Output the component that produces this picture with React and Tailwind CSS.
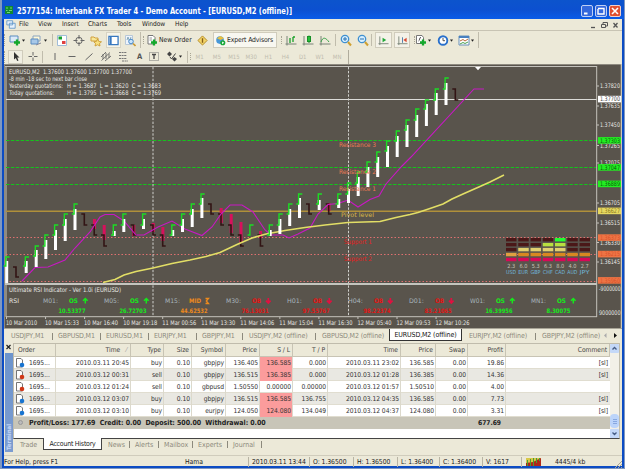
const FONT = "font-['DejaVu_Sans_Condensed','Noto_Sans',sans-serif]";

// [x, high, left tick, body top, body bottom]
const bulls = [
  [6.5, 257, 266, 261, 283],
  [26, 257, 266, 261, 273],
  [36, 246, 256, 250, 267],
  [45.6, 235, 246, 240, 259],
  [55.3, 225, 235, 230, 250],
  [65, 214, 225, 219, 241],
  [74.8, 204, 214, 209, 230],
  [114, 225, 235, 231, 236],
  [123.6, 214, 225, 219, 232],
  [143.3, 214, 225, 219, 229],
  [172.5, 225, 235, 230, 236],
  [182.3, 214, 225, 219, 232],
  [192, 204, 214, 209, 227],
  [201.7, 194, 204, 198, 218],
  [250.6, 225, 235, 235, 235],
  [270, 225, 235, 230, 236],
  [279.7, 214, 225, 219, 234],
  [289.5, 204, 214, 209, 226],
  [299.3, 194, 204, 198, 218],
  [319, 194, 204, 200, 210],
  [338.5, 194, 204, 199, 208],
  [348.3, 183, 194, 189, 203],
  [358, 172, 183, 177, 196],
  [367.7, 162, 172, 167, 187],
  [377.5, 152, 162, 157, 177],
  [387.3, 141, 151, 146, 167],
  [397, 131, 141, 136, 157],
  [406.8, 120, 130, 125, 147],
  [416.5, 109, 120, 115, 137],
  [426.2, 100, 109, 104, 126],
  [436, 89, 100, 93, 115],
  [445.8, 78, 89, 83, 105],
];

// [x, left tick, low, body top, body bottom]
const bears = [
  [16, 267, 277, 0, 0],
  [84.3, 214, 225, 0, 0],
  [94.2, 225, 235, 219, 229],
  [104, 235, 246, 225, 240],
  [133.6, 225, 235, 225, 236],
  [153, 225, 235, 223, 232],
  [162.7, 235, 246, 227, 241],
  [211, 204, 214, 0, 0],
  [221, 214, 225, 208, 223],
  [231, 225, 235, 214, 233],
  [240.8, 235, 246, 222, 243],
  [260.4, 235, 246, 231, 238],
  [309, 204, 214, 0, 0],
  [328.7, 204, 214, 203, 211],
  [455.3, 89, 100, 0, 0],
];

const scale = [
  [86, "1.37820"],
  [106, "1.37635"],
  [125, "1.37450"],
  [145.5, "1.37265"],
  [163, "1.37075"],
  [203, "1.36705"],
  [223, "1.36515"],
  [242.5, "1.36330"],
  [262, "1.36145"],
];

const priceTags = [
  [99, "1.37700", "#ffffff", "#444"],
  [140.3, "1.37303", "#22ee22", "#0a5a0a"],
  [167.3, "1.37047", "#22ee22", "#0a5a0a"],
  [183.8, "1.36889", "#22ee22", "#0a5a0a"],
  [210.8, "1.36627", "#e6d860", "#8a7a20"],
  [237.5, "1.36373", "#ee7444", "#d8522c"],
  [254, "1.36215", "#ee7444", "#d8522c"],
  [280.3, "1.35960", "#ee7444", "#d8522c"],
];

const times = [
  "10 Mar 2010", "10 Mar 15:33", "10 Mar 16:40", "10 Mar 19:18", "11 Mar 00:56", "11 Mar 13:30",
  "11 Mar 14:06", "11 Mar 15:04", "11 Mar 16:30", "12 Mar 05:40", "12 Mar 09:53", "12 Mar 10:26",
];

const rsi = [
  ["M01:", "OS", "10.53377"],
  ["M05:", "OS", "26.72703"],
  ["M15:", "MID", "44.62532"],
  ["M30:", "OB", "76.13031"],
  ["H01:", "OB", "97.55767"],
  ["H04:", "OB", "98.22374"],
  ["D01:", "OB", "83.21065"],
  ["W01:", "OS", "16.39956"],
  ["MN1:", "OS", "8.30075"],
];

const signalColor = { OS: "#16e81c", MID: "#ee8a1c", OB: "#e01414" };

const meters = [
  ["USD", "2.3", ["#4a1818", "#4a1818", "#4a1818", "#e0a040", "#d80858"]],
  ["EUR", "6.0", ["#4a1818", "#4a1818", "#e0d070", "#d88820", "#d80858"]],
  ["GBP", "5.3", ["#4a1818", "#4a1818", "#e0d070", "#d88820", "#d80858"]],
  ["CHF", "6.3", ["#4a1818", "#b8e040", "#e0d070", "#d88820", "#d80858"]],
  ["CAD", "8.0", ["#22ff30", "#b8e040", "#e0d070", "#d88820", "#d80858"]],
  ["AUD", "4.0", ["#4a1818", "#4a1818", "#4a1818", "#d88820", "#d80858"]],
  ["JPY", "2.7", ["#4a1818", "#4a1818", "#4a1818", "#d88820", "#d80858"]],
];

const orders = [
  ["2010.03.11 20:45", "buy", "gbpjpy", "136.405", "136.585", "0.000", "2010.03.11 23:02", "136.585", "19.86", "[sl]"],
  ["2010.03.12 00:31", "sell", "gbpjpy", "136.515", "136.385", "0.000", "2010.03.12 01:28", "136.385", "14.36", "[sl]"],
  ["2010.03.12 01:24", "sell", "gbpusd", "1.50550", "0.00000", "0.00000", "2010.03.12 01:57", "1.50510", "4.00", ""],
  ["2010.03.12 03:07", "buy", "gbpjpy", "136.515", "136.585", "136.755", "2010.03.12 04:35", "136.585", "7.73", "[sl]"],
  ["2010.03.12 03:10", "buy", "eurjpy", "124.050", "124.080", "134.049", "2010.03.12 04:37", "124.080", "3.31", "[sl]"],
];

const COLS = "grid grid-cols-[42px_75px_33px_28px_34px_34px_33px_35px_73px_35px_32px_38px_1fr]";

const Label = ({ x, y, w, fill = "#e8e8e4", size = 6.3, bold, children }) => (
  <text x={x} y={y} textLength={w} lengthAdjust="spacingAndGlyphs" className="whitespace-pre" fill={fill} fontSize={size} fontWeight={bold ? 700 : 400}>
    {children}
  </text>
);

const Chart = () => (
  <svg className={`block h-[264px] w-[618px] overflow-visible ${FONT}`} viewBox="4 64 618 264">
    <rect x="4" y="64" width="618" height="264" fill="#59544c" />
    <path d="M4 64.5H621M4.5 64V328" stroke="#8e8a80" />
    <path d="M5 66.5H597M6 66V317" stroke="#c4c2bc" fill="none" />
    <path d="M621.3 64V328" stroke="#e8e4d4" />

    <path d="M6 99.5H597" stroke="#dcdcd8" />
    <path d="M6 140.5H597M6 167.5H597M6 184.5H597" stroke="#14c41c" strokeDasharray="3.4 1.5" />
    <path d="M6 211.2H597" stroke="#b0903a" strokeWidth="1.5" />
    <path d="M6 237.5H597M6 254.5H597M6 281.5H597" stroke="#e07070" strokeDasharray="1.5 2" />
    <path d="M153 67V317M348.5 67V317" stroke="#d0d0cc" strokeDasharray="2.4 1.5" />

    {bears.map(([x, , , top, bottom]) => (
      <g key={x}>
        {top > 0 && <rect x={x - 1.3} y={top} width="3" height={bottom - top} fill="#d8105c" />}
      </g>
    ))}
    {bears.map(([x, tick, low]) => (
      <path key={x} d={`M${x - 3} ${tick}H${x}V${low}H${x + 3}`} fill="none" stroke="#321414" strokeWidth="1.6" />
    ))}
    <path
      d="M22 281L35 267.5L48 267L65 260L75 248L90 232L100 217L105 214.5H114L124 221L136 235H144L158 227L172 221L185 229L202 235.5L212 227L221 214L230 205H242L253 212L265 230L271 235H283L289 238L298 234L310 228L318 214L328 204.5L338 203.5L348 200L358 207L370 199.5L379 196L386 184L402 166L411 157L474 89H484"
      fill="none"
      stroke="#c818c4"
      strokeWidth="1.1"
    />
    <path
      d="M103 282.5L115 279.5L124 275L136 271.5L153 268L172 263.5L190 260L206 256.5L220 252.5L237 244.5L252 238L266 234L285 230.5L305 227.5L325 225L348 222.5L380 221.5L396 217.5L410 214.5L418 212.5L430 208.5L443 204L452 199L463 194L480 186.5L490 182L504 175"
      fill="none"
      stroke="#e2de66"
      strokeWidth="1.6"
    />
    {bulls.map(([x, high, tick, top, bottom]) => (
      <g key={x}>
        <rect x={x - 1.3} y={top} width="3" height={bottom - top} fill="#fff" />
        <path d={`M${x - 3} ${tick}H${x - 0.7}V${high}H${x + 3}`} fill="none" stroke="#1cdc24" strokeWidth="1.4" />
      </g>
    ))}

    <g>
      <Label x="339" y="147" w="37" fill="#ee7a54">Resistance 3</Label>
      <Label x="339" y="174" w="37" fill="#ee7a54">Resistance 2</Label>
      <Label x="339" y="190.5" w="37" fill="#ee7a54">Resistance 1</Label>
      <Label x="341" y="217.3" w="33" fill="#d8b848">Pivot level</Label>
      <Label x="344" y="244" w="28" fill="#e81c1c">Support 1</Label>
      <Label x="344" y="260.5" w="28" fill="#e81c1c">Support 2</Label>
    </g>

    <Label x="9" y="74.3" w="123">EURUSD,M2  1.37600 1.37600 1.37700 1.37700</Label>
    <Label x="9" y="80.7" w="78">-8 min -18 sec to next bar close</Label>
    <Label x="9" y="88" w="54">Yesterday quotations:</Label>
    <Label x="67" y="88" w="94">H = 1.3687  L = 1.3620  C = 1.3683</Label>
    <Label x="9" y="95.2" w="45">Today quotations:</Label>
    <Label x="67" y="95.2" w="94">H = 1.3795  L = 1.3668  C = 1.3769</Label>
    <path d="M475 67H481L478 70.3Z" fill="#fff" />

    {/* indicator pane */}
    <rect x="5" y="283" width="592" height="2" fill="#c4c4be" />
    <path d="M6 316.7H597" stroke="#c4c2bc" />
    <Label x="9" y="292.3" w="112">Ultimate RSI Indicator - Ver 1.0i (EURUSD)</Label>
    <Label x="9" y="303.3" w="10">RSI</Label>
    {rsi.map(([name, signal, value], i) => {
      const x = 43 + i * 61;
      const color = signalColor[signal];
      return (
        <g key={name}>
          <Label x={x} y="303.3" w="15" fill="#a8b4bc">{name}</Label>
          <Label x={x + (signal === "MID" ? 24 : 26)} y="303.3" w={signal === "MID" ? 12 : 9} fill={color} bold>{signal}</Label>
          {signal === "OS" && <path d={`M${x + 42.3} 303.5V299M${x + 40} 300.8L${x + 42.3} 298.5L${x + 44.6} 300.8`} fill="none" stroke={color} strokeWidth="1.5" />}
          {signal === "OB" && <path d={`M${x + 42.3} 298V303M${x + 40} 300.7L${x + 42.3} 303L${x + 44.6} 300.7`} fill="none" stroke="#e01040" strokeWidth="1.7" />}
          {signal === "MID" && <path d={`M${x + 40.5} 298.5H${x + 43.5}L${x + 41.3} 301L${x + 43.5} 303.5H${x + 40.5}`} fill="none" stroke={color} strokeWidth="1.3" />}
          <Label x={x + 15.5} y="312.5" w={value.length > 7 ? 27 : 24} fill={color} bold size={6.1}>{value}</Label>
        </g>
      );
    })}

    {/* currency strength */}
    {meters.map(([name, value, bars], i) => {
      const x = 506 + i * 12.25;
      return (
        <g key={name}>
          {bars.map((color, j) => (
            <rect key={j} x={x} y={238 + j * 4.95} width="10.5" height="3.4" fill={color} />
          ))}
          <Label x={x + 1.2} y="268.3" w="8" size={5.6} fill="#c8c4b8">{value}</Label>
          <Label x={x} y="274.3" w="10" size={5.4} fill="#70b4d8">{name}</Label>
        </g>
      );
    })}

    {/* price and time scales */}
    <path d="M596.7 66V317" stroke="#c4c2bc" />
    {scale.map(([y, label]) => (
      <g key={label}>
        <path d={`M597 ${y}H599`} stroke="#c4c2bc" />
        <Label x="600" y={y + 2.4} w="20">{label}</Label>
      </g>
    ))}
    {priceTags.map(([y, label, bg, fg]) => (
      <g key={label}>
        <rect x="598" y={y - 3.2} width="23" height="6.6" fill={bg} />
        <Label x="600" y={y + 2.4} w="20" fill={fg}>{label}</Label>
      </g>
    ))}
    <Label x="599" y="291" w="21.5">-9000000</Label>
    <Label x="599" y="314.7" w="21.5">9000000</Label>
    {times.map((t, i) => (
      <g key={t}>
        <path d={`M${6.5 + i * 39.05} 317V319`} stroke="#c4c2bc" />
        <Label x={6 + i * 39.05} y="324.8" w={i === 0 ? 31 : 34}>{t}</Label>
      </g>
    ))}
  </svg>
);

const Icon = ({ className = "w-3", children }) => (
  <svg className={`h-[13px] shrink-0 ${className}`} viewBox="0 0 12 13" fill="none" strokeWidth="1">
    {children}
  </svg>
);

const Caret = () => (
  <svg className="h-[3px] w-[3px] shrink-0" viewBox="0 0 4 3"><path d="M0 0H4L2 3Z" fill="#222" /></svg>
);

const Plus = () => <path d="M8 5.5V11.5M5 8.5H11" stroke="#14a82c" strokeWidth="2.3" />;
const Grip = () => <span className="h-3 w-[3px] shrink-0 border-l border-dotted border-[#a8a594]" />;
const Axes = () => <path d="M2 2V11.5M.5 10H11.5" stroke="#7a8478" />;

const TitleBar = () => (
  <div className="flex h-[19px] items-center bg-linear-to-b from-[#0c54cc] via-[#0c50d0] to-[#0a5ce8] pl-[3px] pr-[3px] text-white">
    <svg className="mt-px h-2 w-2" viewBox="0 0 8 8">
      <rect width="8" height="8" fill="#128a30" />
      <path d="M1 2H3M5 2H7M1 4.5H2.5M4 4.5H7M2 6.5H5" stroke="#70d878" />
    </svg>
    <svg className="ml-[3px] mt-[3px] h-3 w-[280px] overflow-visible" viewBox="0 0 280 12">
      <text y="8.5" x="1" textLength="275" lengthAdjust="spacingAndGlyphs" className={`${FONT} fill-white text-[8px] font-bold`}>
        2577154: Interbank FX Trader 4 - Demo Account - [EURUSD,M2 (offline)]
      </text>
    </svg>
    <div className="ml-auto mt-[3px] flex gap-[2px]">
      <svg className="h-3 w-3" viewBox="0 0 12 12"><rect x=".5" y=".5" width="11" height="11" rx="1.5" fill="#3468dc" stroke="#c0d0f4" /><path d="M3 8.5H6.5" stroke="#fff" strokeWidth="2" /></svg>
      <svg className="h-3 w-3" viewBox="0 0 12 12"><rect x=".5" y=".5" width="11" height="11" rx="1.5" fill="#3468dc" stroke="#c0d0f4" /><path d="M3 4V9H9V3.5H3" fill="none" stroke="#fff" strokeWidth="1.4" /></svg>
      <svg className="h-3 w-3" viewBox="0 0 12 12"><rect x=".5" y=".5" width="11" height="11" rx="1.5" fill="#e05030" stroke="#f4d0c8" /><path d="M3 3L9 9M9 3L3 9" stroke="#fff" strokeWidth="1.6" /></svg>
    </div>
  </div>
);

const MenuBar = () => (
  <div className="flex h-3 items-center border-b border-[#c8c4b4] pr-[3px] text-[6.6px] tracking-[-0.05px]">
    <Icon className="ml-[2px] w-[10px]">
      <path d="M1 2H8V7H1ZM4 5H11V11H4Z" fill="#e8f2fc" stroke="#5c94c8" />
    </Icon>
    <span className="ml-[3px] w-[19px]">File</span>
    <span className="w-6">View</span>
    <span className="w-[26px]">Insert</span>
    <span className="w-[29px]">Charts</span>
    <span className="w-[25px]">Tools</span>
    <span className="w-[33px]">Window</span>
    <span>Help</span>
    <svg className="ml-auto h-2 w-[30px]" viewBox="0 0 30 8" fill="none" stroke="#555">
      <path d="M2 6.5H6" strokeWidth="1.3" />
      <path d="M14 3V1.5H18.5V5H17M12.5 3.5H16.5V6.5H12.5Z" />
      <path d="M24.5 2L28.5 6.5M28.5 2L24.5 6.5" strokeWidth="1.3" />
    </svg>
  </div>
);

const MainToolbar = () => (
  <div className="flex h-[18px] items-center text-[6.8px]">
    <Grip />
    <Icon className="ml-[2px] w-3"><path d="M1 2H9V8H1Z" fill="#dceaf8" stroke="#5a8cc0" /><Plus /></Icon>
    <span className="ml-px"><Caret /></span>
    <Icon className="ml-[5px] w-3"><path d="M3 2H10V7H3Z" fill="#fff8d8" stroke="#8aa4c0" /><path d="M1 5H8V10H1Z" fill="#a8c8e8" stroke="#5a8cc0" /><path d="M6 11L11 9" stroke="#889" /></Icon>
    <span className="ml-[2px]"><Caret /></span>
    <span className="ml-[5px] h-3 w-px bg-[#c0bcac]" />
    <Icon className="ml-[3px] w-3"><path d="M1.5 1.5H10.5V11.5H1.5Z" fill="#fff" stroke="#a0bcd8" /><path d="M2.5 4H6" stroke="#18a030" strokeWidth="3" /><path d="M6 8.5H9.5" stroke="#e04040" strokeWidth="3" /></Icon>
    <Icon className="ml-[5px] w-3"><circle cx="6" cy="6.5" r="3.2" stroke="#666" /><path d="M6 1V5M6 8V12M.5 6.5H4.5M7.5 6.5H11.5" stroke="#666" /></Icon>
    <Icon className="ml-[5px] w-3"><path d="M1 3H4L5 4H8V7H1Z" fill="#f8e898" stroke="#d0a040" /><path d="M7.5 5L8.8 7.5L11.5 7.8L9.5 9.5L10 12L7.5 10.8L5 12L5.5 9.5L3.8 7.8L6.3 7.5Z" fill="#f8e080" stroke="#c89428" strokeWidth=".8" /></Icon>
    <span className="ml-1 flex h-4 w-[15px] items-center justify-center border border-[#d8d4c4] bg-[#f6f4ea]">
      <Icon className="w-[11px]"><path d="M1 2H11V11H1Z" fill="#fff" stroke="#3878c0" strokeWidth="1.4" /><path d="M3 2V11" stroke="#3878c0" strokeWidth="2" /></Icon>
    </span>
    <Icon className="ml-[3px] w-3"><path d="M1.5 1.5H8.5V10.5H1.5Z" fill="#eef4fc" stroke="#b8c8d8" /><path d="M3 6L4 3L5.5 7L7 3" stroke="#8ab" /><circle cx="7" cy="7.5" r="2.3" fill="#c8e4fc" stroke="#4888c8" /><path d="M9 9.5L11.5 12" stroke="#c89830" strokeWidth="1.6" /></Icon>
    <span className="ml-1 h-4 w-px bg-[#c0bcac]" />
    <span className="ml-[2px]"><Grip /></span>
    <Icon className="ml-[2px] w-3"><path d="M2 1.5H7L9 3.5V10H2Z" fill="#fff" stroke="#777" /><path d="M3.5 4H6M3.5 6H6" stroke="#999" /><Plus /></Icon>
    <span className="ml-px w-[36px] whitespace-nowrap">New Order</span>
    <Icon className="ml-[2px] w-[11px]"><path d="M6 1.5L11 6.5L6 11.5L1 6.5Z" fill="#f4d468" stroke="#b08820" /><path d="M6 4V9" stroke="#86601a" strokeWidth="1.5" /></Icon>
    <span className="ml-[5px] flex h-4 w-16 shrink-0 items-center border border-[#d0ccbc] bg-[#f8f7f0] pl-px">
      <Icon className="w-[11px]"><circle cx="5.5" cy="6" r="4.2" fill="#4898d8" /><path d="M2 4L6 1.5L10 4L6 6Z" fill="#e8c040" /><circle cx="8.5" cy="9" r="2.8" fill="#18a838" /><path d="M7.8 7.5L10 9L7.8 10.5Z" fill="#fff" /></Icon>
      <span className="ml-px whitespace-nowrap tracking-[-0.12px]">Expert Advisors</span>
    </span>
    <span className="ml-[4px]"><Grip /></span>
    <Icon className="ml-[3px] w-3"><Axes /><path d="M5 4V9M8 3V8M8 3H10" stroke="#18a028" strokeWidth="1.3" /></Icon>
    <Icon className="ml-[5px] w-3"><Axes /><path d="M7 1.5V9" stroke="#189028" /><rect x="5.5" y="2.5" width="3" height="5" fill="#28c038" stroke="#189028" /></Icon>
    <Icon className="ml-[5px] w-3"><Axes /><path d="M2 8C4 2 7 4 10 8" stroke="#38a048" /></Icon>
    <span className="ml-1 h-3 w-px bg-[#c0bcac]" />
    <Icon className="ml-[4px] w-3"><circle cx="5" cy="5" r="3.7" fill="#d8f0ff" stroke="#4090d0" strokeWidth="1.3" /><path d="M3 5H7M5 3V7" stroke="#2870b0" /><path d="M8 8L11 11.5" stroke="#d0a030" strokeWidth="2" /></Icon>
    <Icon className="ml-[5px] w-3"><circle cx="5" cy="5" r="3.7" fill="#d8f0ff" stroke="#4090d0" strokeWidth="1.3" /><path d="M3 5H7" stroke="#2870b0" /><path d="M8 8L11 11.5" stroke="#d0a030" strokeWidth="2" /></Icon>
    <span className="ml-[2px] h-3 w-px bg-[#c0bcac]" />
    <span className="ml-[3px] flex h-4 w-[17px] items-center justify-center border border-[#d0ccbc] bg-[#f4f2e8]">
      <Icon className="w-[11px]"><Axes /><path d="M5 3.5L9 6L5 8.5Z" fill="#20a838" /></Icon>
    </span>
    <span className="ml-[2px] flex h-4 w-[16px] items-center justify-center border border-[#d0ccbc] bg-[#f4f2e8]">
      <Icon className="w-[11px]"><Axes /><path d="M6 3V9" stroke="#4878a8" /><path d="M10.5 3.5L7 6L10.5 8.5Z" fill="#d84830" /></Icon>
    </span>
    <span className="ml-[4px]"><Grip /></span>
    <Icon className="w-3"><path d="M1.5 1.5H7L8.5 3.5V9.5H1.5Z" fill="#fff" stroke="#777" /><path d="M3.5 7C5 7 4 3 6 3.5" stroke="#555" /><Plus /></Icon>
    <span className="ml-[1px]"><Caret /></span>
    <Icon className="ml-[6px] w-3"><circle cx="6" cy="6.5" r="4.3" fill="#fff" stroke="#2870cc" strokeWidth="1.9" /><path d="M6 4V6.7H8" stroke="#555" /></Icon>
    <span className="ml-px"><Caret /></span>
    <Icon className="ml-[5px] w-3"><path d="M1 2H11V11H1Z" fill="#fff" stroke="#6890b8" /><path d="M1 3H11" stroke="#4880c0" strokeWidth="2" /><path d="M2 7L5 5.5L7 7L10 5" stroke="#b86838" /><path d="M2 10L5 8.5L7 9.5L10 8" stroke="#48a050" /></Icon>
    <span className="ml-px"><Caret /></span>
    <span className="ml-1 h-4 w-px bg-[#c0bcac]" />
  </div>
);

const LineToolbar = () => (
  <div className="flex h-[15px] items-center text-[6px]">
    <Grip />
    <span className="ml-px flex h-[14px] w-[15px] items-center justify-center border border-[#d0ccbc] bg-[#f0eee2]">
      <Icon className="w-3"><path d="M4 2V9.5L5.8 8L7.2 11L8.5 10.4L7.2 7.5H9.5Z" fill="#333" /></Icon>
    </span>
    <Icon className="ml-[4px] w-3"><path d="M6 2V5.5M6 7.5V11M1.5 6.5H5M7 6.5H10.5" stroke="#666" /></Icon>
    <span className="ml-[3px] h-3 w-px bg-[#c0bcac]" />
    <Icon className="ml-[6px] w-3"><path d="M6 3V10" stroke="#666" /></Icon>
    <Icon className="ml-[5px] w-3"><path d="M2.5 6.5H9.5" stroke="#666" /></Icon>
    <Icon className="ml-[5px] w-3"><path d="M2.5 10L9.5 3.5" stroke="#666" /></Icon>
    <Icon className="ml-[5px] w-3"><path d="M1 7L6 2M1.5 10.5L10 2.5M5 11L11 6M3 4V9M6 3V9M9 4V8" stroke="#666" strokeWidth=".9" /></Icon>
    <Icon className="ml-[5px] w-3"><path d="M2 2.5H10M2 5.5H10M2 8.5H10M5 11H11" stroke="#777" strokeDasharray="2 .6" /></Icon>
    <span className="ml-[8px] w-[10px] text-[7.5px] font-bold text-[#555]">A</span>
    <Icon className="ml-px w-3"><path d="M1.5 2.5H10.5V10.5H1.5Z" stroke="#777" strokeDasharray="1 1" /><path d="M4 4.5H8M6 4.5V9" stroke="#444" strokeWidth="1.3" /></Icon>
    <Icon className="ml-[6px] w-3"><path d="M1 4L3.5 1.5L6 4L3.5 6.5ZM6 9L8.5 7L11 9L8.5 11.5Z" fill="#444" /><path d="M4 7L5.5 9L9.5 3.5" stroke="#444" /></Icon>
    <span className="ml-px"><Caret /></span>
    <span className="ml-[5px] h-3 w-px bg-[#c0bcac]" />
    <span className="ml-[2px]"><Grip /></span>
    <div className="flex text-center text-[#c0bcae]">
      {["M1", "M5", "M15", "M30", "H1", "H4", "D1", "W1", "MN"].map((p) => (
        <span key={p} className="w-[17.2px]">{p}</span>
      ))}
    </div>
    <span className="ml-[2px] h-[14px] w-px bg-[#b0ac9c]" />
  </div>
);

const ChartTabs = () => (
  <div className="flex h-[15px] items-start border-t border-[#a8a496] text-[7px] leading-[11px] tracking-[-0.12px] whitespace-nowrap text-[#8c897c]">
    <span className="w-12 pl-[7px] pt-[2px]">USDJPY,M1</span>
    {["GBPUSD,M1", "EURUSD,M1", "EURJPY,M1"].map((t) => (
      <span key={t} className="flex w-[48px] pt-[2px]"><i className="mr-[5px] mt-[2px] h-[7px] w-px bg-[#8c897c]" />{t}</span>
    ))}
    <span className="flex w-[46px] pt-[2px]"><i className="mr-[5px] mt-[2px] h-[7px] w-px bg-[#8c897c]" />GBPJPY,M1</span>
    <span className="flex w-[73px] pt-[2px]"><i className="mr-[6px] mt-[2px] h-[7px] w-px bg-[#8c897c]" />USDJPY,M2 (offline)</span>
    <span className="flex w-[74px] pt-[2px]"><i className="mr-[6px] mt-[2px] h-[7px] w-px bg-[#8c897c]" />GBPUSD,M2 (offline)</span>
    <span className="h-[12px] w-[73px] border border-t-0 border-[#333] bg-white pt-[1px] text-center text-[#111]">EURUSD,M2 (offline)</span>
    <span className="w-[73px] pl-[7px] pt-[2px]">EURJPY,M2 (offline)</span>
    <span className="flex w-[67px] pt-[2px]"><i className="mr-[6px] mt-[2px] h-[7px] w-px bg-[#8c897c]" />GBPJPY,M2 (offline)</span>
    <svg className="mt-1 ml-[2px] h-[5px] w-[13px]" viewBox="0 0 13 5"><path d="M2.5 0V5L0 2.5Z" fill="#aaa" /><path d="M10 0V5L13 2.5Z" fill="#111" /></svg>
  </div>
);

const OrderIcon = ({ type }) => (
  <svg className="h-[10px] w-[10px]" viewBox="0 0 10 10">
    <path d="M1.5 .5H6L7.5 2V9H1.5Z" fill="#fff" stroke="#666" strokeWidth=".9" />
    <circle cx="7" cy="7" r="2.3" fill={type === "buy" ? "#1874d0" : "#d03818"} />
  </svg>
);

const cell = "border-r border-[#dcd9cc] pr-px text-right";

const History = () => (
  <div className="flex h-[96px] w-[607px] border border-[#c0bcac] border-b-[#444] bg-white">
    <div className="w-[596px] text-[6.7px] leading-[12px] tracking-[-0.04px] whitespace-nowrap text-[#333]">
      <div className={`${COLS} h-[12.6px] border-b border-[#c8c4b4] bg-[#ece9d8] text-[#444]`}>
        <span className="border-r border-[#c8c4b4] pl-1">Order</span>
        <span className="border-r border-[#c8c4b4] pr-[3px] text-right">Time <span className="pl-1 text-[#999]">⁄</span></span>
        {["Type", "Size", "Symbol", "Price", "S / L", "T / P", "Time", "Price", "Swap", "Profit", "Comment"].map((h, i) => (
          <span key={i} className="border-r border-[#c8c4b4] pr-[2px] text-right">{h}</span>
        ))}
      </div>
      {orders.map(([open, type, symbol, price, sl, tp, close, closePrice, profit, comment], i) => (
        <div key={open} className={`${COLS} h-[12.1px] border-b border-[#e0ddd0] ${i % 2 ? "bg-[#e9e8e2]" : "bg-white"}`}>
          <span className="flex items-center gap-[4px] border-r border-[#dcd9cc] pl-px"><OrderIcon type={type} />1695...</span>
          <span className={cell}>{open}</span>
          <span className={cell}>{type}</span>
          <span className={cell}>0.10</span>
          <span className={cell}>{symbol}</span>
          <span className={cell}>{price}</span>
          <span className={`${cell} ${i === 2 ? "" : "bg-[#fb9c9c]"}`}>{sl}</span>
          <span className={cell}>{tp}</span>
          <span className={cell}>{close}</span>
          <span className={cell}>{closePrice}</span>
          <span className={cell}>0.00</span>
          <span className={cell}>{profit}</span>
          <span className="pr-[2px] text-right">{comment}</span>
        </div>
      ))}
      <div className="flex h-[11.5px] items-center bg-[#c8c5b8] pl-1 font-bold text-[#222]">
        <span className="h-[5px] w-[5px] rounded-full border border-[#999] bg-[#bbb]" />
        <span className="ml-[6px] w-[449px] text-[7px]">Profit/Loss: 177.69&nbsp; Credit: 0.00&nbsp; Deposit: 500.00&nbsp; Withdrawal: 0.00</span>
        <span>677.69</span>
      </div>
    </div>
    <div className="flex flex-1 flex-col justify-between bg-[#f2f0e8]">
      <svg className="h-[9px] w-[9px]" viewBox="0 0 9 9"><rect width="9" height="9" rx="1" fill="#c4d8f8" /><path d="M2.5 5.5L4.5 3.5L6.5 5.5" fill="none" stroke="#445c84" strokeWidth="1.3" /></svg>
      <div>
        <div className="mb-px flex h-[14px] w-[9px] flex-col items-center justify-center gap-px rounded-sm bg-[#bcd4fa]">
          <i className="h-px w-1 bg-[#88a8e0]" /><i className="h-px w-1 bg-[#88a8e0]" /><i className="h-px w-1 bg-[#88a8e0]" />
        </div>
        <svg className="h-[9px] w-[9px]" viewBox="0 0 9 9"><rect width="9" height="9" rx="1" fill="#c4d8f8" /><path d="M2.5 3.5L4.5 5.5L6.5 3.5" fill="none" stroke="#445c84" strokeWidth="1.3" /></svg>
      </div>
    </div>
  </div>
);

const TerminalTabs = () => (
  <div className="flex h-[13px] text-[7px] leading-[12px] whitespace-nowrap text-[#8c897c]">
    <span className="w-[30px] pl-[7px]">Trade</span>
    <span className="-mt-px h-[12px] w-[59px] border border-t-0 border-[#444] bg-white text-center tracking-[-0.25px] text-[#222]">Account History</span>
    <span className="w-[27px] pl-[6px]">News</span>
    {[["Alerts", "w-[29px]"], ["Mailbox", "w-[34px]"], ["Experts", "w-[35px]"], ["Journal", "w-[34px]"], ["", "w-2"]].map(([t, w]) => (
      <span key={t} className={`flex ${w}`}><i className="mr-[5px] mt-[2px] h-[7px] w-px shrink-0 bg-[#8c897c]" />{t}</span>
    ))}
  </div>
);

const StatusBar = () => (
  <div className="flex h-[13px] items-center border-t border-[#d0ccbc] text-[6.8px] tracking-[-0.05px] whitespace-nowrap text-[#222]">
    <span className="w-[181px]">For Help, press F1</span>
    <span className="w-[63px]">Hama</span>
    <span className="w-[61px] border-l border-[#b8b4a4] pl-[3px]">2010.03.11 13:44</span>
    <span className="w-[44px] border-l border-[#b8b4a4] pl-[3px]">O: 1.36500</span>
    <span className="w-[44px] border-l border-[#b8b4a4] pl-[3px]">H: 1.36500</span>
    <span className="w-[42px] border-l border-[#b8b4a4] pl-[3px]">L: 1.36400</span>
    <span className="w-[43px] border-l border-[#b8b4a4] pl-[3px]">C: 1.36400</span>
    <span className="w-[39px] border-l border-[#b8b4a4] pl-[3px]">V: 1617</span>
    <span className="flex h-[10px] items-center border-l border-[#b8b4a4] pl-1">
      <svg className="h-2 w-[15px]" viewBox="0 0 15 8"><rect width="15" height="8" fill="#b02818" /><path d="M0 0H15L7 4L0 5Z" fill="#d8c848" /><path d="M1.5 2V8M4.5 1V8M7.5 0V8M10.5 0V5M13.5 0V3" stroke="#4c9c34" /></svg>
    </span>
    <span className="ml-[14px]">4445/4 kb</span>
    <svg className="ml-auto mt-1 h-[9px] w-[9px]" viewBox="0 0 9 9"><path d="M1 9L9 1M4 9L9 4M7 9L9 7" stroke="#aaa694" /></svg>
  </div>
);

const App = () => {
  return (
    <div className={`h-[469px] w-[625px] overflow-hidden border-x-[2px] border-r-[1px] border-b border-[#8098c0] bg-[#0c4cc4] ${FONT}`}>
      <TitleBar />
      <div className="mx-[2px] h-[447px] w-[618px] bg-[#ece9d8] text-[#222]">
        <MenuBar />
        <MainToolbar />
        <LineToolbar />
        <Chart />
        <ChartTabs />
        <div className="flex h-[112px] overflow-hidden">
          <div className="flex w-[9px] flex-col items-center">
            <svg className="mt-px h-[6px] w-[5px]" viewBox="0 0 5 6"><path d="M.5 1L4.5 5M4.5 1L.5 5" stroke="#222" strokeWidth="1.2" /></svg>
            <div className="mt-[3px] flex h-[99px] w-[8px] items-center bg-linear-to-b from-[#6c94cc] to-[#7c9cd0]">
              <span className="mt-auto mb-[2px] rotate-180 text-[6px] leading-[8px] font-bold text-[#c4d8f8] [writing-mode:vertical-rl]">Terminal</span>
            </div>
          </div>
          <div>
            <History />
            <TerminalTabs />
          </div>
        </div>
        <StatusBar />
      </div>
    </div>
  );
};

export default App;
